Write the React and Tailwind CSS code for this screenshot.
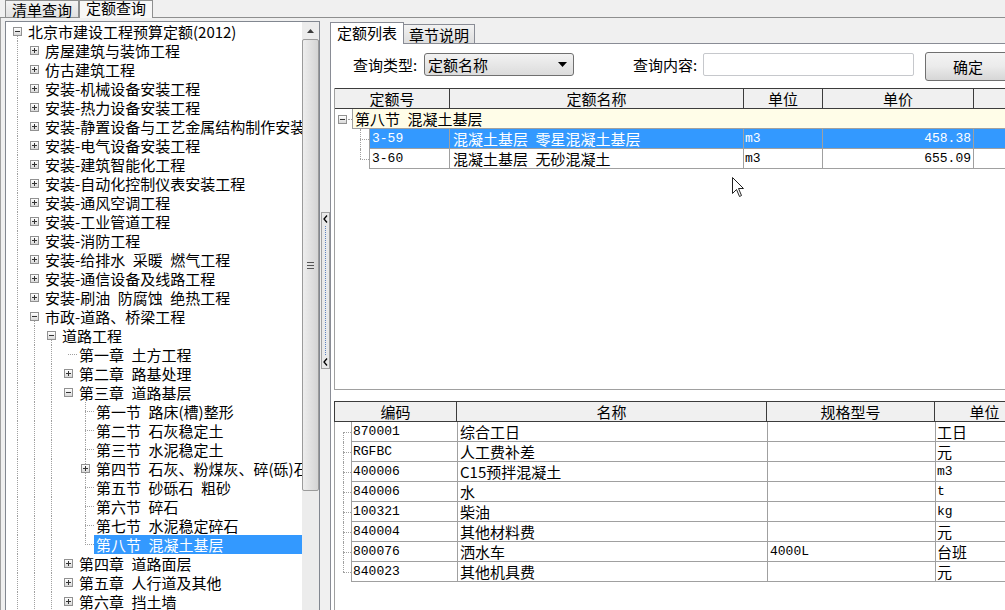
import React from 'react'

const MONO = "font-['Liberation_Mono',monospace] text-[13px]"

const tree = [
    ['北京市建设工程预算定额(2012)', 0, 'm'],
    ['房屋建筑与装饰工程', 1, 'p'],
    ['仿古建筑工程', 1, 'p'],
    ['安装-机械设备安装工程', 1, 'p'],
    ['安装-热力设备安装工程', 1, 'p'],
    ['安装-静置设备与工艺金属结构制作安装工程', 1, 'p'],
    ['安装-电气设备安装工程', 1, 'p'],
    ['安装-建筑智能化工程', 1, 'p'],
    ['安装-自动化控制仪表安装工程', 1, 'p'],
    ['安装-通风空调工程', 1, 'p'],
    ['安装-工业管道工程', 1, 'p'],
    ['安装-消防工程', 1, 'p'],
    ['安装-给排水 采暖 燃气工程', 1, 'p'],
    ['安装-通信设备及线路工程', 1, 'p'],
    ['安装-刷油 防腐蚀 绝热工程', 1, 'p'],
    ['市政-道路、桥梁工程', 1, 'm'],
    ['道路工程', 2, 'm'],
    ['第一章 土方工程', 3, 'l'],
    ['第二章 路基处理', 3, 'p'],
    ['第三章 道路基层', 3, 'm'],
    ['第一节 路床(槽)整形', 4, 'l'],
    ['第二节 石灰稳定土', 4, 'l'],
    ['第三节 水泥稳定土', 4, 'l'],
    ['第四节 石灰、粉煤灰、碎(砾)石', 4, 'p'],
    ['第五节 砂砾石 粗砂', 4, 'l'],
    ['第六节 碎石', 4, 'l'],
    ['第七节 水泥稳定碎石', 4, 'l'],
    ['第八节 混凝土基层', 4, 'l', true],
    ['第四章 道路面层', 3, 'p'],
    ['第五章 人行道及其他', 3, 'p'],
    ['第六章 挡土墙', 3, 'p'],
]

const sp = (s) => s.replace(/ /g, '\u2002')

// vertical dotted guides for the tree, [x, kind]
const guides = (i) => {
    const g = []
    g.push([11, i === 0 ? 'down' : 'full'])
    if (i === 15) g.push([28, 'down'])
    if (i > 15) g.push([28, 'full'])
    if (i === 16) g.push([45, 'down'])
    if (i > 16) g.push([45, 'full'])
    if (i >= 20 && i <= 26) g.push([79, 'full'])
    if (i === 27) g.push([79, 'up'])
    return g
}

const Box = ({ minus, left, top = 5 }) => (
    <div
        className="absolute w-[9px] h-[9px] border border-[#919191] bg-gradient-to-b from-white to-[#d9d9d9] z-10"
        style={{ left, top }}
    >
        <div className="absolute left-[1px] top-[3px] w-[5px] h-px bg-[#333]" />
        {!minus && <div className="absolute left-[3px] top-[1px] w-px h-[5px] bg-[#333]" />}
    </div>
)

const TreeRow = ({ row, i }) => {
    const [text, lv, kind, sel] = row
    const c = 11 + 17 * lv
    const tl = 22 + 17 * lv
    return (
        <div className="relative h-[19px] flex" style={{ paddingLeft: tl - 2 }}>
            {guides(i).map(([x, k]) => (
                <div
                    key={x}
                    className={`absolute border-l border-dotted border-[#a0a0a0] ${k === 'full' ? 'top-0 h-[19px]' : k === 'down' ? 'top-[9px] h-[10px]' : 'top-0 h-[10px]'}`}
                    style={{ left: x }}
                />
            ))}
            {kind === 'l'
                ? <div className="absolute top-[9px] border-t border-dotted border-[#a0a0a0]" style={{ left: c, width: tl - c - 2 }} />
                : <Box minus={kind === 'm'} left={c - 4} />}
            <span className={`pl-[2px] leading-[19px] whitespace-nowrap ${sel ? 'flex-1 bg-[#3399ff] text-white' : ''}`}>{sp(text)}</span>
        </div>
    )
}

const Chevron = () => (
    <svg width="5" height="8" viewBox="0 0 5 8" className="mx-auto">
        <polyline points="4,0.5 1,4 4,7.5" fill="none" stroke="#000" strokeWidth="1.3" />
    </svg>
)

const upper = [
    { code: '3-59', name: '混凝土基层 零星混凝土基层', unit: 'm3', price: '458.38', sel: true },
    { code: '3-60', name: '混凝土基层 无砂混凝土', unit: 'm3', price: '655.09' },
]

const lower = [
    ['870001', '综合工日', '', '工日'],
    ['RGFBC', '人工费补差', '', '元'],
    ['400006', 'C15预拌混凝土', '', 'm3'],
    ['840006', '水', '', 't'],
    ['100321', '柴油', '', 'kg'],
    ['840004', '其他材料费', '', '元'],
    ['800076', '洒水车', '4000L', '台班'],
    ['840023', '其他机具费', '', '元'],
]

const isLatin = (s) => /^[\x00-\x7f]+$/.test(s)

const Head = ({ w, children, first }) => (
    <div className={`shrink-0 h-full border-r border-[#3c3c3c] text-center leading-[19px] ${first ? 'border-l' : ''}`} style={{ width: w }}>
        {children}
    </div>
)

export default function App() {
    return (
        <div className="w-[1005px] h-[610px] overflow-hidden bg-[#f0f0f0] text-[15px] text-black font-['Noto_Sans_CJK_SC','Noto_Sans',sans-serif] flex flex-col relative">
            {/* top tabs */}
            <div className="h-[18px] shrink-0 flex items-end pl-[5px] border-b border-[#8e8f8f]">
                <div className="h-[17px] px-[6px] border border-b-0 border-[#8e8f8f] bg-gradient-to-b from-[#f3f3f3] to-[#e1e1e1] leading-[16px] pt-[1px]">清单查询</div>
                <div className="h-[18px] -mb-px px-[6px] border border-b-0 border-[#8e8f8f] bg-[#f7f7f7] leading-[14px] relative">定额查询</div>
            </div>

            <div className="flex-1 flex min-h-0 pl-[4px] border-l border-[#a0a0a0]">
                {/* left tree */}
                <div className="mt-[3px] w-[315px] shrink-0 border border-[#828790] border-b-0 flex bg-white">
                    <div className="w-[296px] overflow-hidden">
                        {tree.map((r, i) => <TreeRow key={i} row={r} i={i} />)}
                    </div>
                    <div className="w-[17px] bg-[#ececec] flex flex-col">
                        <div className="h-[17px] flex items-center justify-center">
                            <svg width="7" height="4" viewBox="0 0 7 4"><polygon points="0,4 3.5,0 7,4" fill="#3c3c3c" /></svg>
                        </div>
                        <div className="h-[452px] rounded-[2px] border border-[#9b9b9b] bg-gradient-to-r from-[#eeeeee] to-[#d4d4d4] flex items-center justify-center">
                            <div className="flex flex-col gap-[2px]">
                                <div className="w-[7px] h-px bg-[#555]" />
                                <div className="w-[7px] h-px bg-[#555]" />
                                <div className="w-[7px] h-px bg-[#555]" />
                            </div>
                        </div>
                    </div>
                </div>

                {/* splitter */}
                <div className="w-[10px] shrink-0 pl-[1px] pt-[194px]">
                    <div className="w-[9px] h-[157px] border border-[#a0a0a0] bg-[#e9e9e9] flex flex-col items-center py-[2px]">
                        <Chevron />
                        <div className="flex-1 my-[3px] border-l border-dotted border-[#5b82c0]" />
                        <Chevron />
                    </div>
                </div>

                {/* right */}
                <div className="flex-1 min-w-0 flex flex-col pt-[4px]">
                    <div className="h-[21px] shrink-0 flex items-end">
                        <div className="h-[22px] -mb-px px-[6px] border border-b-0 border-[#898c95] bg-white leading-[20px] relative z-10">定额列表</div>
                        <div className="h-[19px] px-[5px] border border-b-0 border-l-0 border-[#898c95] bg-gradient-to-b from-[#f2f2f2] to-[#dedede] leading-[19px]">章节说明</div>
                    </div>
                    <div className="flex-1 bg-white border-l border-t border-[#898c95] flex flex-col overflow-hidden">
                        {/* query row */}
                        <div className="h-[44px] shrink-0 flex items-start pl-[22px]">
                            <div className="mt-[9px] h-[23px] leading-[23px] w-[71px] shrink-0">查询类型:</div>
                            <div className="mt-[9px] w-[150px] h-[23px] shrink-0 rounded-[3px] border border-[#707070] bg-gradient-to-b from-[#f2f2f2] to-[#dcdcdc] flex items-center pl-[3px] pr-[6px]">
                                <span className="flex-1 leading-[21px]">定额名称</span>
                                <svg width="9" height="5" viewBox="0 0 9 5"><polygon points="0,0 9,0 4.5,5" fill="#000" /></svg>
                            </div>
                            <div className="ml-[59px] mt-[9px] h-[23px] leading-[23px] w-[70px] shrink-0">查询内容:</div>
                            <div className="mt-[9px] w-[211px] h-[23px] shrink-0 rounded-[2px] border border-[#c6c8cc] bg-white" />
                            <div className="ml-[11px] mt-[8px] w-[86px] h-[29px] shrink-0 rounded-[3px] border border-[#707070] bg-gradient-to-b from-[#f4f4f4] via-[#ebebeb] to-[#d6d6d6] text-center leading-[27px]">确定</div>
                        </div>

                        {/* upper grid */}
                        <div className="ml-[3px] h-[302px] shrink-0 border-l border-b border-[#a0a0a0] flex flex-col overflow-hidden">
                            <div className="flex h-[21px] shrink-0 border-t border-b border-[#3c3c3c] bg-[#f0f0f0] -ml-px">
                                <Head w={116} first>定额号</Head>
                                <Head w={294}>定额名称</Head>
                                <Head w={79}>单位</Head>
                                <Head w={151}>单价</Head>
                                <Head w={120}></Head>
                            </div>
                            <div className="flex h-[20px] shrink-0">
                                <div className="relative w-[17px] shrink-0">
                                    <Box minus left={3} top={6} />
                                    <div className="absolute left-[13px] top-[10px] w-[4px] border-t border-dotted border-[#a0a0a0]" />
                                </div>
                                <div className="flex-1 bg-[#fffde8] border-l border-b border-[#a0a0a0] pl-[2px] leading-[19px] whitespace-nowrap">{sp('第八节 混凝土基层')}</div>
                            </div>
                            {upper.map((r, i) => (
                                <div key={r.code} className="flex h-[20px] shrink-0 whitespace-nowrap">
                                    <div className="relative w-[34px] shrink-0">
                                        <div className={`absolute left-[25px] top-0 border-l border-dotted border-[#a0a0a0] ${i === 0 ? 'h-[20px]' : 'h-[10px]'}`} />
                                        <div className="absolute left-[25px] top-[10px] w-[9px] border-t border-dotted border-[#a0a0a0]" />
                                    </div>
                                    <div className={`flex ${r.sel ? 'bg-[#3399ff] text-white' : ''}`}>
                                        <div className={`w-[81px] shrink-0 border-l border-r border-b border-[#a0a0a0] pl-[2px] leading-[19px] ${MONO}`}>{r.code}</div>
                                        <div className="w-[294px] shrink-0 border-r border-b border-[#a0a0a0] pl-[3px] leading-[19px]">{sp(r.name)}</div>
                                        <div className={`w-[79px] shrink-0 border-r border-b border-[#a0a0a0] pl-[1px] leading-[19px] ${MONO}`}>{r.unit}</div>
                                        <div className={`w-[151px] shrink-0 border-r border-b border-[#a0a0a0] pr-[2px] text-right leading-[19px] ${MONO}`}>{r.price}</div>
                                        <div className="w-[120px] shrink-0 border-b border-[#a0a0a0]" />
                                    </div>
                                </div>
                            ))}
                        </div>

                        {/* lower grid */}
                        <div className="ml-[3px] mt-[11px] flex-1 flex flex-col overflow-hidden">
                            <div className="flex h-[21px] shrink-0 border-t border-b border-[#3c3c3c] bg-[#f0f0f0]">
                                <Head w={123} first>编码</Head>
                                <Head w={310}>名称</Head>
                                <Head w={168}>规格型号</Head>
                                <Head w={100}>单位</Head>
                            </div>
                            <div className="flex-1 border-l border-[#a0a0a0]">
                                {lower.map((r, i) => (
                                    <div key={r[0]} className="flex h-[20px] whitespace-nowrap">
                                        <div className="relative w-[16px] shrink-0">
                                            <div className={`absolute left-[8px] border-l border-dotted border-[#a0a0a0] ${i === 0 ? 'top-[10px] h-[10px]' : i === lower.length - 1 ? 'top-0 h-[10px]' : 'top-0 h-[20px]'}`} />
                                            <div className="absolute left-[8px] top-[10px] w-[8px] border-t border-dotted border-[#a0a0a0]" />
                                        </div>
                                        <div className={`w-[107px] shrink-0 border-l border-r border-b border-[#a0a0a0] pl-[1px] leading-[19px] ${MONO}`}>{r[0]}</div>
                                        <div className="w-[310px] shrink-0 border-r border-b border-[#a0a0a0] pl-[2px] leading-[19px]">{r[1]}</div>
                                        <div className={`w-[168px] shrink-0 border-r border-b border-[#a0a0a0] pl-[2px] leading-[19px] ${MONO}`}>{r[2]}</div>
                                        <div className={`w-[100px] shrink-0 border-b border-[#a0a0a0] pl-[1px] leading-[19px] ${isLatin(r[3]) ? MONO : ''}`}>{r[3]}</div>
                                    </div>
                                ))}
                            </div>
                        </div>
                    </div>
                </div>
            </div>

            {/* mouse pointer */}
            <svg className="absolute left-[732px] top-[177px]" width="13" height="21" viewBox="0 0 13 21">
                <path d="M0.5 0.5 L0.5 16.5 L4.5 12.5 L7.5 19.5 L9.5 18.5 L6.5 11.5 L11.5 11.5 Z" fill="#fff" stroke="#222" strokeWidth="1" />
            </svg>
        </div>
    )
}
